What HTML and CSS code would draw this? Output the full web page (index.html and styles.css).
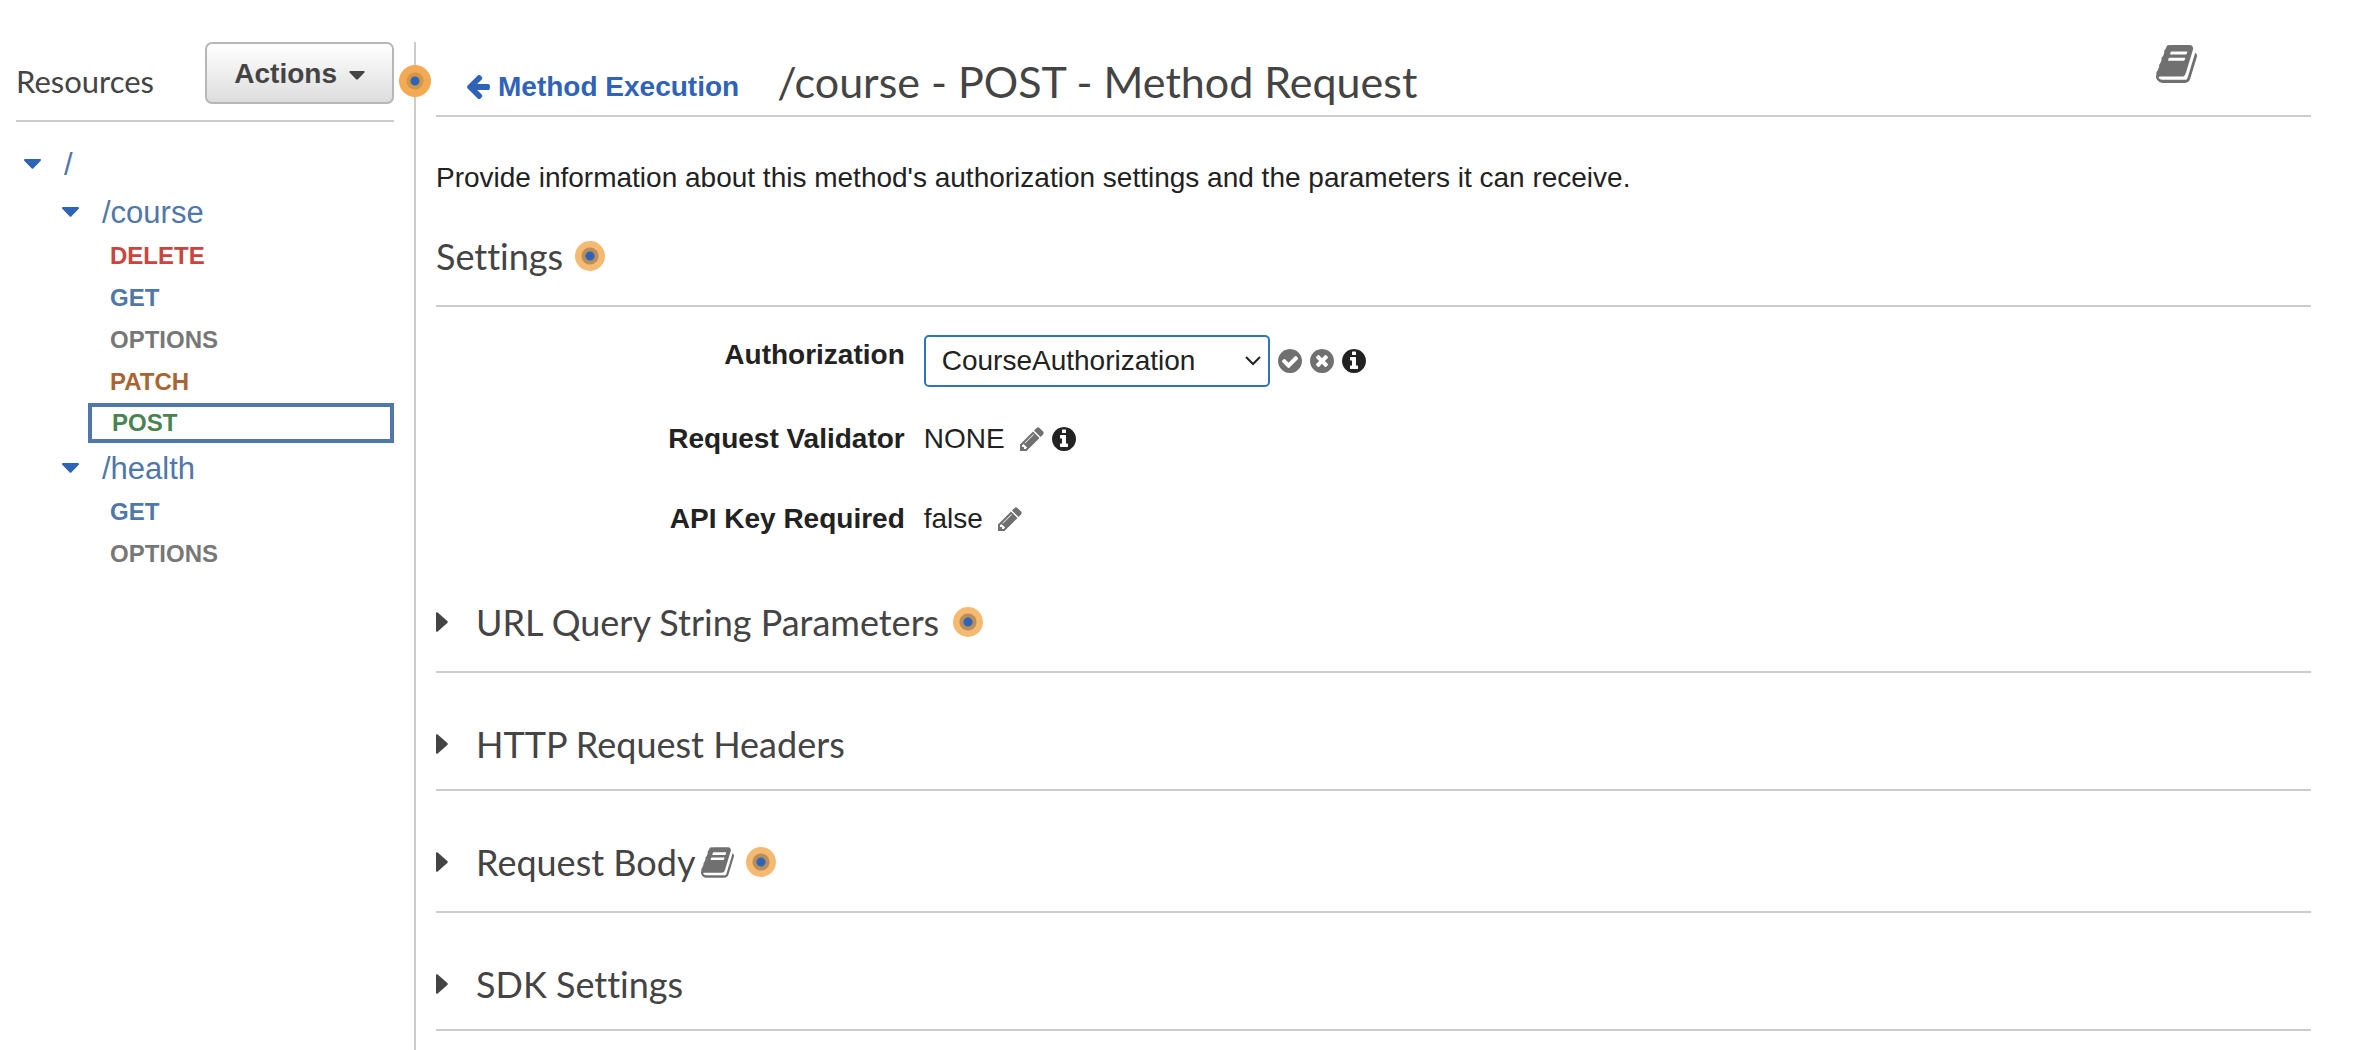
FILE: index.html
```
<!DOCTYPE html>
<html lang="en">
<head>
<meta charset="utf-8">
<meta name="viewport" content="width=device-width, initial-scale=1">
<title>/course - POST - Method Request</title>
<link rel="stylesheet" href="styles.css">
</head>
<body>
<svg class="sprite" aria-hidden="true">
  <symbol id="book" viewBox="64 128 1664 1536"><path d="M1703 478q40 57 18 129l-275 906q-19 64-76.500 107.500t-122.500 43.500h-923q-77 0-148.500-53.500t-99.500-131.500q-24-67-2-127 0-4 3-27t4-37q1-8-3-21.500t-3-19.500q2-11 8-21t16.500-23.500 16.500-23.500q23-38 45-91.500t30-91.500q3-10 .5-30t-.5-28q3-11 17-28t17-23q21-36 42-92t25-90q1-9-2.500-32t.5-28q4-13 22-30.500t22-22.500q19-26 42.500-84.500t27.500-96.500q1-8-3-25.500t-2-26.500q2-8 9-18t18-23 17-21q8-12 16.500-30.500t15-35 16-36 19.500-32 26.500-23.500 36-11.500 47.500 5.500l-1 3q38-9 51-9h761q74 0 114 56t18 130l-274 906q-36 119-71.500 153.500t-128.500 34.500h-869q-27 0-38 15-11 16-1 43 24 70 144 70h923q29 0 56-15.500t35-41.500l300-987q7-22 5-57 38 15 59 43zm-1064 2q-4 13 2 22.500t20 9.500h608q13 0 25.500-9.500t16.500-22.500l21-64q4-13-2-22.500t-20-9.500h-608q-13 0-25.500 9.500t-16.500 22.500zm-83 256q-4 13 2 22.500t20 9.500h608q13 0 25.500-9.500t16.500-22.500l21-64q4-13-2-22.500t-20-9.500h-608q-13 0-25.500 9.500t-16.500 22.500z"/></symbol>
  <symbol id="check" viewBox="128 128 1536 1536"><path d="M1412 734q0-28-18-46l-91-90q-19-19-45-19t-45 19l-408 407-226-226q-19-19-45-19t-45 19l-91 90q-18 18-18 46 0 27 18 45l362 362q19 19 45 19 27 0 46-19l543-543q18-18 18-45zm252 162q0 209-103 385.500t-279.500 279.500-385.500 103-385.500-103-279.500-279.500-103-385.500 103-385.500 279.500-279.500 385.500-103 385.500 103 279.500 279.500 103 385.500z"/></symbol>
  <symbol id="times" viewBox="128 128 1536 1536"><path d="M1277 1122q0-26-19-45l-181-181 181-181q19-19 19-45 0-27-19-46l-90-90q-19-19-46-19-26 0-45 19l-181 181-181-181q-19-19-45-19-27 0-46 19l-90 90q-19 19-19 46 0 26 19 45l181 181-181 181q-19 19-19 45 0 27 19 46l90 90q19 19 46 19 26 0 45-19l181-181 181 181q19 19 45 19 27 0 46-19l90-90q19-19 19-46zm387-226q0 209-103 385.500t-279.500 279.500-385.500 103-385.500-103-279.500-279.500-103-385.500 103-385.500 279.500-279.500 385.500-103 385.500 103 279.500 279.500 103 385.500z"/></symbol>
  <symbol id="info" viewBox="128 128 1536 1536"><path d="M1152 1376v-160q0-14-9-23t-23-9h-96v-512q0-14-9-23t-23-9h-320q-14 0-23 9t-9 23v160q0 14 9 23t23 9h96v320h-96q-14 0-23 9t-9 23v160q0 14 9 23t23 9h448q14 0 23-9t9-23zm-128-896v-160q0-14-9-23t-23-9h-192q-14 0-23 9t-9 23v160q0 14 9 23t23 9h192q14 0 23-9t9-23zm640 416q0 209-103 385.500t-279.500 279.500-385.500 103-385.500-103-279.500-279.500-103-385.500 103-385.500 279.500-279.500 385.500-103 385.500 103 279.500 279.500 103 385.500z"/></symbol>
  <symbol id="pencil" viewBox="128 128 1536 1536"><path d="M491 1536l91-91-235-235-91 91v107h128v128h107zm523-928q0-22-22-22-10 0-17 7l-542 542q-7 7-7 17 0 22 22 22 10 0 17-7l542-542q7-7 7-17zm-54-192l416 416-832 832h-416v-416zm683 96q0 53-37 90l-166 166-416-416 166-165q36-38 90-38 53 0 91 38l235 234q37 39 37 91z"/></symbol>
  <symbol id="arrow-left" viewBox="192 250 1472 1548"><path d="M1664 960v128q0 53-32.500 90.500t-84.500 37.500h-704l293 294q38 36 38 90t-38 90l-75 76q-37 37-90 37-52 0-91-37l-651-652q-37-37-37-90 0-52 37-91l651-650q38-38 91-38 52 0 90 38l75 74q38 38 38 91t-38 91l-293 293h704q52 0 84.500 37.500t32.500 90.500z"/></symbol>
  <symbol id="caret-down" viewBox="0 0 17 10"><path d="M1 0h15q1 0 1 1 0 .5-.5 1L9.500 9.300q-1 1-2 0L.5 2Q0 1.500 0 1 0 0 1 0z"/></symbol>
  <symbol id="caret-right" viewBox="0 0 12 20"><path d="M0 1Q0 0 1 .2q.5 0 1 .6l9.300 8.200q1 1 0 2L2 19.200q-.5.600-1 .6-1 .2-1-.8z"/></symbol>
</svg>

<div class="layout">
  <aside class="sidebar">
    <header class="sidebar-head">
      <h2 class="sidebar-title">Resources</h2>
      <button class="actions" type="button">Actions <svg class="actions-caret"><use href="#caret-down"/></svg></button>
    </header>
    <span class="hint hint-large sidebar-hint"></span>
    <nav aria-label="Resources">
      <ul class="tree">
        <li>
          <a class="path" href="#root"><svg class="caret"><use href="#caret-down"/></svg>/</a>
          <ul class="branch">
            <li>
              <a class="path" href="#course"><svg class="caret"><use href="#caret-down"/></svg>/course</a>
              <ul class="methods">
                <li><a class="method delete" href="#course-delete">DELETE</a></li>
                <li><a class="method get" href="#course-get">GET</a></li>
                <li><a class="method options" href="#course-options">OPTIONS</a></li>
                <li><a class="method patch" href="#course-patch">PATCH</a></li>
                <li><a class="method post selected" href="#course-post" aria-current="page">POST</a></li>
              </ul>
            </li>
            <li>
              <a class="path" href="#health"><svg class="caret"><use href="#caret-down"/></svg>/health</a>
              <ul class="methods">
                <li><a class="method get" href="#health-get">GET</a></li>
                <li><a class="method options" href="#health-options">OPTIONS</a></li>
              </ul>
            </li>
          </ul>
        </li>
      </ul>
    </nav>
  </aside>

  <main class="content">
    <header class="content-head">
      <a class="back" href="#execution"><svg class="back-icon"><use href="#arrow-left"/></svg>Method Execution</a>
      <h1 class="title">/course - POST - Method Request</h1>
      <a class="docs" href="#docs" aria-label="Documentation"><svg class="docs-icon"><use href="#book"/></svg></a>
    </header>

    <p class="intro">Provide information about this method's authorization settings and the parameters it can receive.</p>

    <section>
      <h2 class="settings-title">Settings <span class="hint"></span></h2>
      <div class="settings">
        <div class="field">
          <label class="label" for="authorization">Authorization</label>
          <div class="value">
            <span class="select-wrap">
              <select class="select" id="authorization">
                <option>CourseAuthorization</option>
                <option>NONE</option>
              </select>
              <svg class="chevron" viewBox="0 0 16 10"><path d="M1 1l7 7 7-7"/></svg>
            </span>
            <button class="icon-button" type="button" aria-label="Save"><svg class="icon"><use href="#check"/></svg></button>
            <button class="icon-button" type="button" aria-label="Cancel"><svg class="icon"><use href="#times"/></svg></button>
            <button class="icon-button dark" type="button" aria-label="About authorization"><svg class="icon"><use href="#info"/></svg></button>
          </div>
        </div>
        <div class="field">
          <span class="label">Request Validator</span>
          <div class="value">
            <span class="text">NONE</span>
            <button class="icon-button" type="button" aria-label="Edit request validator"><svg class="icon"><use href="#pencil"/></svg></button>
            <button class="icon-button dark" type="button" aria-label="About request validator"><svg class="icon"><use href="#info"/></svg></button>
          </div>
        </div>
        <div class="field">
          <span class="label">API Key Required</span>
          <div class="value">
            <span class="text">false</span>
            <button class="icon-button" type="button" aria-label="Edit API key required"><svg class="icon"><use href="#pencil"/></svg></button>
          </div>
        </div>
      </div>
    </section>

    <h2 class="section with-hint"><button class="toggle" type="button" aria-expanded="false"><svg class="toggle-caret"><use href="#caret-right"/></svg>URL Query String Parameters</button><span class="hint"></span></h2>
    <h2 class="section"><button class="toggle" type="button" aria-expanded="false"><svg class="toggle-caret"><use href="#caret-right"/></svg>HTTP Request Headers</button></h2>
    <h2 class="section with-hint"><button class="toggle" type="button" aria-expanded="false"><svg class="toggle-caret"><use href="#caret-right"/></svg>Request Body</button><svg class="book-small"><use href="#book"/></svg><span class="hint"></span></h2>
    <h2 class="section"><button class="toggle" type="button" aria-expanded="false"><svg class="toggle-caret"><use href="#caret-right"/></svg>SDK Settings</button></h2>
  </main>
</div>
</body>
</html>
```
FILE: styles.css
```
* {
  box-sizing: border-box;
}

body {
  margin: 0;
  background: #fff;
  color: #222;
  font: 28px/40px "Liberation Sans", Arial, sans-serif;
  font-variant-ligatures: none;
}

h1, h2, p, ul {
  margin: 0;
  padding: 0;
  font-weight: 400;
}

ul {
  list-style: none;
}

a {
  color: inherit;
  text-decoration: none;
}

button {
  padding: 0;
  border: 0;
  background: none;
  color: inherit;
  font: inherit;
  font-variant-ligatures: none;
  cursor: pointer;
}

svg {
  display: block;
  flex: none;
  fill: currentColor;
}

.sprite {
  position: absolute;
  width: 0;
  height: 0;
}

.layout {
  display: flex;
  min-height: 100vh;
  padding-top: 42px;
}

/* Sidebar */

.sidebar {
  position: relative;
  flex: none;
  width: 416px;
  padding: 0 20px 0 16px;
  border-right: 2px solid #ccc;
}

.sidebar-head {
  display: flex;
  align-items: flex-start;
  justify-content: space-between;
  height: 80px;
  border-bottom: 2px solid #ccc;
}

.sidebar-title {
  padding-top: 19px;
  color: #444;
  font-family: Lato, sans-serif;
  font-size: 31px;
}

.actions {
  display: flex;
  align-items: center;
  gap: 12px;
  height: 62px;
  padding: 2px 27px 0;
  border: 2px solid #b7b7b7;
  border-radius: 7px;
  background: linear-gradient(#fff, #ddd);
  color: #444;
  font-weight: 700;
}

.actions-caret {
  width: 16px;
  height: 9px;
  margin-top: 2px;
}

.hint {
  flex: none;
  width: 30px;
  height: 30px;
  border-radius: 50%;
  background: radial-gradient(circle, #2f63b8 0 4px, #b88e5d 5px 8px, #f5b971 9px);
}

.hint-large {
  width: 32px;
  height: 32px;
  background: radial-gradient(circle, #2f63b8 0 4px, #d29649 5px 8px, #f4a954 9px);
}

.sidebar-hint {
  position: absolute;
  top: 23px;
  right: -17px;
}

.tree {
  padding-top: 17px;
}

.path {
  display: flex;
  align-items: center;
  gap: 23px;
  height: 48px;
  padding: 4px 0 0 8px;
  color: #5077aa;
  font-size: 31px;
}

.caret {
  width: 17px;
  height: 10px;
  margin-bottom: 2px;
  color: #2f63b8;
}

.branch {
  padding-left: 38px;
}

.methods {
  padding-left: 34px;
}

.method {
  display: block;
  padding-left: 22px;
  font-size: 24px;
  font-weight: 700;
  line-height: 42px;
}

.selected {
  padding-left: 20px;
  border: 4px solid #5077aa;
  line-height: 32px;
}

.delete { color: #c9453e; }
.get { color: #5077aa; }
.options { color: #777; }
.patch { color: #a76634; }
.post { color: #478451; }

/* Content */

.content {
  flex: 1;
  min-width: 0;
  padding: 0 47px 0 20px;
}

.content-head {
  display: flex;
  align-items: flex-start;
  height: 75px;
  border-bottom: 2px solid #ccc;
}

.back {
  display: flex;
  align-items: center;
  gap: 8px;
  padding: 25px 0 0 31px;
  color: #2f63b8;
  font-weight: 700;
}

.back-icon {
  width: 23px;
  height: 24px;
}

.title {
  padding: 14px 0 0 38px;
  color: #444;
  font-family: Lato, sans-serif;
  font-size: 43px;
  line-height: 52px;
}

.docs {
  margin: 3px 114px 0 auto;
  color: #707070;
}

.docs-icon {
  width: 41px;
  height: 38px;
}

.intro {
  padding-top: 41px;
}

.settings-title {
  display: flex;
  align-items: center;
  gap: 12px;
  margin-top: 36px;
  padding-bottom: 27px;
  border-bottom: 2px solid #ccc;
  color: #444;
  font-family: Lato, sans-serif;
  font-size: 36px;
  line-height: 44px;
}

.settings {
  padding: 28px 0 12px;
}

.field {
  display: grid;
  grid-template-columns: 25% 1fr;
  column-gap: 19px;
}

.field:nth-child(2) {
  margin: 32px 0 40px;
}

.label {
  font-weight: 700;
  text-align: right;
}

.value {
  display: flex;
  align-items: center;
  gap: 8px;
}

.text {
  margin-right: 7px;
}

.select-wrap {
  display: grid;
  align-items: center;
}

.select {
  grid-area: 1 / 1;
  width: 346px;
  height: 52px;
  padding: 0 16px;
  border: 2px solid #2f73b9;
  border-radius: 5px;
  background: #fff;
  color: #222;
  font: inherit;
  appearance: none;
}

.chevron {
  grid-area: 1 / 1;
  justify-self: end;
  width: 16px;
  height: 10px;
  margin-right: 9px;
  fill: none;
  stroke: #222;
  stroke-width: 2;
  pointer-events: none;
}

.icon-button {
  color: #707070;
}

.dark {
  color: #222;
}

.icon {
  width: 24px;
  height: 24px;
}

.section {
  display: flex;
  align-items: center;
  padding: 49px 0 23px;
  border-bottom: 2px solid #ccc;
  color: #444;
  font-family: Lato, sans-serif;
  font-size: 36px;
  line-height: 44px;
}

.with-hint {
  padding-bottom: 27px;
}

.toggle {
  display: flex;
  align-items: center;
  gap: 28px;
}

.toggle-caret {
  width: 12px;
  height: 20px;
}

.section .hint {
  margin-left: 14px;
}

.book-small {
  width: 33px;
  height: 31px;
  margin-left: 6px;
  color: #707070;
}

.book-small + .hint {
  margin-left: 12px;
}
```
